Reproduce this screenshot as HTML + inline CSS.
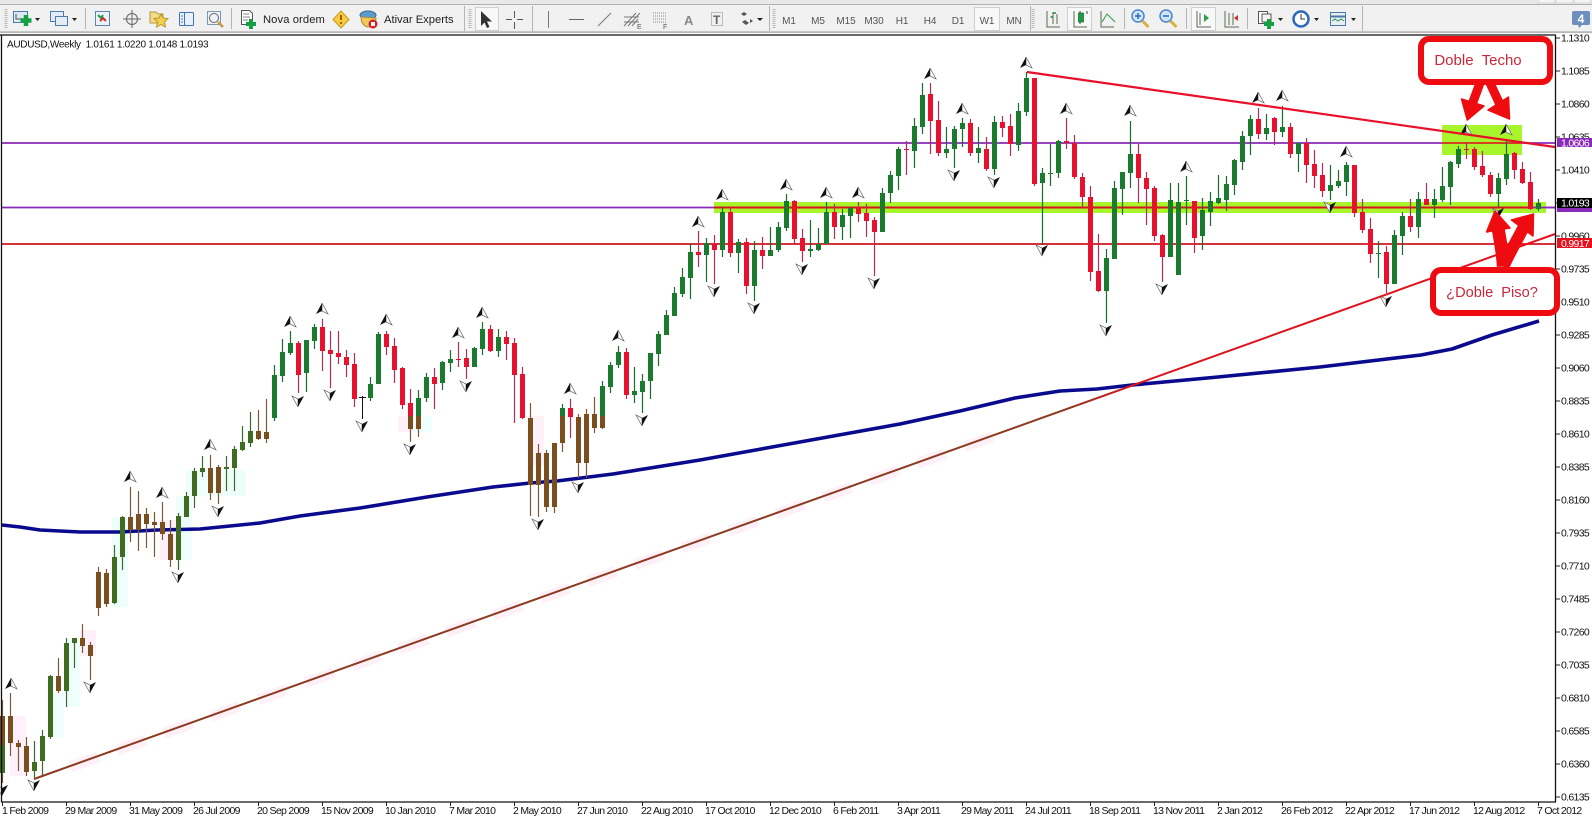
<!DOCTYPE html>
<html><head><meta charset="utf-8"><title>AUDUSD,Weekly</title>
<style>html,body{margin:0;padding:0;background:#fff;overflow:hidden}svg{display:block}
text{font-family:"Liberation Sans",Arial,sans-serif}
.a text{font-size:10.5px;letter-spacing:-.68px;fill:#111}
.t text{font-size:10px;fill:#555;letter-spacing:-.1px}
.l{fill:none;stroke:#555;stroke-width:1}
</style></head><body>
<svg width="1592" height="818" viewBox="0 0 1592 818" xmlns="http://www.w3.org/2000/svg">
<defs>
<g id="u"><path d="M0-6 6 5 0 2Z" fill="#fff" stroke="#666" stroke-width=".7"/><path d="M0-6-6 5 0 2Z" fill="#111"/></g>
<g id="d"><path d="M0 6-6-5 0-2Z" fill="#fff" stroke="#666" stroke-width=".7"/><path d="M0 6 6-5 0-2Z" fill="#111"/></g>
<linearGradient id="tl" gradientUnits="userSpaceOnUse" x1="34" y1="0" x2="1555" y2="0"><stop offset="0" stop-color="#8c3a20"/><stop offset=".68" stop-color="#8c3a20"/><stop offset=".72" stop-color="#d8141e"/><stop offset="1" stop-color="#e8101c"/></linearGradient>
</defs>
<!-- toolbar -->
<rect width="1592" height="5" fill="#e9e9e9"/><rect y="4" width="1592" height="1" fill="#b0b0b0"/>
<rect y="5" width="1592" height="27" fill="#f1f1f1"/><rect y="31.5" width="1592" height="1.2" fill="#9a9a9a"/>
<rect y="33" width="1592" height="2" fill="#fafafa"/>
<g fill="#f4f4f4" stroke="#ccc" stroke-width=".7"><rect x="1538" y="-2" width="17" height="5"/><rect x="1556" y="-2" width="17" height="5"/><rect x="1574" y="-2" width="17" height="5"/></g>
<!-- grips and separators -->
<g stroke="#b8b8b8" stroke-width="3" stroke-dasharray="1 1"><path d="M6 9V29M470 9V29M774 9V29M1033 9V29"/></g>
<g stroke="#b5b5b5"><path d="M85.500 8V29M231.500 8V29M464.500 6V31M532.500 6V31M769.500 6V31M1030.500 6V31M1124.500 8V29M1186.500 8V29M1247.500 8V29M1362.500 6V31"/></g>
<!-- pressed buttons -->
<g fill="#f8f8f8" stroke="#cfcfcf"><rect x="475.500" y="7.500" width="23" height="23"/><rect x="974.500" y="7.500" width="25" height="23"/><rect x="1067.500" y="7.500" width="24" height="23"/><rect x="1191.500" y="7.500" width="24" height="23"/></g>
<!-- new chart -->
<rect x="13.500" y="11.500" width="14" height="11" fill="#dce8f4" stroke="#4c7cae"/><path d="M16 14v5h8" class="l" stroke="#4c7cae"/>
<path d="M26 15v11M20.500 20.500h11" stroke="#12a040" stroke-width="4.500"/><path d="M35 18h5l-2.500 3z" fill="#222"/>
<!-- profiles -->
<rect x="50.500" y="11.500" width="13" height="10" fill="#e4ecf6" stroke="#4c7cae"/><rect x="55.500" y="16.500" width="12" height="9" fill="#e4ecf6" stroke="#4c7cae"/><path d="M72 18h5l-2.500 3z" fill="#222"/>
<!-- market watch -->
<rect x="95.500" y="11.500" width="14" height="14" fill="#eef3f8" stroke="#5a86b4"/><path d="M98 15l3 3 2-3" stroke="#18a045" fill="none" stroke-width="2"/><path d="M100 21l3-3 3 3" stroke="#d03030" fill="none" stroke-width="2"/>
<!-- crosshair nav -->
<circle cx="132" cy="19" r="5.500" fill="none" stroke="#666"/><path d="M132 10v18M123 19h18" stroke="#666"/>
<!-- folder star -->
<path d="M150 12h6l2 2h5v9h-13z" fill="#f0dc8a" stroke="#b8983e"/><path d="M161 14l2 4 5 .500-3.500 3.500 1 5-4.500-2.500-4.500 2.500 1-5-3.500-3.500 5-.500z" fill="#f4d04a" stroke="#b8982e"/>
<!-- window -->
<rect x="179.500" y="12.500" width="14" height="13" rx="1" fill="#eaf1fa" stroke="#3f74b6"/><path d="M184.500 13v12M181 16h2M181 19h2M181 22h2" stroke="#3f74b6"/>
<!-- tester -->
<rect x="207.500" y="11.500" width="13" height="13" fill="#edf2f6" stroke="#7a98b4"/><circle cx="214" cy="18" r="4.500" fill="none" stroke="#666"/><path d="M218 22l5 5" stroke="#c8983e" stroke-width="2.500"/>
<!-- new order -->
<path d="M241.500 10.500h8l3 3v11h-11z" fill="#fff" stroke="#555"/><path d="M243 14h6M243 17h7M243 20h5" stroke="#888"/><path d="M251 19v10M246 24h10" stroke="#12a040" stroke-width="4"/>
<text x="263" y="23" font-size="11.200" fill="#222" letter-spacing=".1">Nova ordem</text>
<!-- warning -->
<path d="M341 11l8 8.500-8 8.500-8-8.500z" fill="#f6cc3c" stroke="#c89a1e"/><path d="M341 15v5" stroke="#a05a10" stroke-width="2"/><circle cx="341" cy="23" r="1.100" fill="#a05a10"/>
<!-- experts -->
<ellipse cx="368" cy="15" rx="8" ry="4" fill="#5c9ccc" stroke="#3a6a96"/><path d="M361 17c0 8 5 10 8 10s7-2 7-9z" fill="#f0c860" stroke="#b08a30"/><circle cx="373" cy="24" r="4.500" fill="#d8202a"/><rect x="371" y="22" width="4" height="4" fill="#fff"/>
<text x="384" y="23" font-size="11.200" fill="#222">Ativar Experts</text>
<!-- cursor -->
<path d="M481 11v15l3.500-3.500 2.500 5.500 2.500-1-2.500-5.500h5z" fill="#333"/>
<path d="M514.500 11v7M514.500 22v7M506 19.500h6M517 19.500h6" stroke="#555"/>
<!-- draw tools -->
<path d="M548.500 11v17" stroke="#777"/><path d="M569 19.500h15" stroke="#666"/><path d="M598 26l13-13" stroke="#777"/>
<path d="M624 26l12-13M628 26l12-13M632 26l6-7M624 17h15M624 22h15" stroke="#777" fill="none"/><text x="637" y="29" font-size="7" fill="#555">E</text>
<path d="M653 13h13M653 16h13M653 19h13M653 22h13" stroke="#888" stroke-dasharray="1 1"/><text x="663" y="29" font-size="7" fill="#555">F</text>
<text x="684" y="25" font-size="13" fill="#888" font-weight="bold">A</text>
<rect x="711.500" y="12.500" width="11" height="13" fill="none" stroke="#888" stroke-dasharray="1 1"/><text x="713" y="24" font-size="12" fill="#666" font-weight="bold">T</text>
<path d="M741 14l3-2 3 2-3 2zM745 20l4 3-3 2-4-3z" fill="#555"/><path d="M750 19l3 2-3 2z" fill="#555"/><path d="M757 18h6l-3 3z" fill="#222"/>
<!-- timeframes -->
<g class="t" text-anchor="middle"><text x="789" y="24">M1</text><text x="818" y="24">M5</text><text x="846" y="24">M15</text><text x="874" y="24">M30</text><text x="902" y="24">H1</text><text x="930" y="24">H4</text><text x="958" y="24">D1</text><text x="987" y="24">W1</text><text x="1014" y="24">MN</text></g>
<!-- chart type -->
<g fill="none" stroke="#5a6a50"><path d="M1047 11v16h13M1053 12v12M1057 14v10"/></g><path d="M1050.500 17h3M1053 13h3" stroke="#208a3a" stroke-width="1.500"/>
<path d="M1074 11v16h13" fill="none" stroke="#5a6a50"/><path d="M1080 11v13M1087 11v3" stroke="#444"/><rect x="1078.500" y="13" width="5" height="9" fill="#18a040" stroke="#146030" stroke-width=".7"/>
<path d="M1101 11v16h13" fill="none" stroke="#5a6a50"/><path d="M1102 22l5-8 8 8" fill="none" stroke="#2a9a48"/>
<!-- zoom -->
<circle cx="1138" cy="16" r="6" fill="#cfe4fa" stroke="#4a88c8" stroke-width="1.500"/><path d="M1135 16h6M1138 13v6" stroke="#2a6ab0" stroke-width="1.500"/><path d="M1142.500 21l6 6" stroke="#d8b040" stroke-width="3"/>
<circle cx="1166" cy="16" r="6" fill="#cfe4fa" stroke="#4a88c8" stroke-width="1.500"/><path d="M1163 16h6" stroke="#2a6ab0" stroke-width="1.500"/><path d="M1170.500 21l6 6" stroke="#d8b040" stroke-width="3"/>
<!-- autoscroll -->
<path d="M1197 11v16h14M1200 13v12" fill="none" stroke="#5a6a50"/><path d="M1204 14l5 4-5 4z" fill="#2aa04a"/>
<path d="M1225 11v16h14M1229 13v12M1233 13v12" fill="none" stroke="#5a6a50"/><path d="M1238 15l-4 3 4 3z" fill="#c83030"/>
<!-- add indicator -->
<path d="M1258.500 11.500h9v12h-9z" fill="#fff" stroke="#555"/><path d="M1262 14h9v8h-9z" fill="#f4f4f4" stroke="#555"/><path d="M1269 19v10M1264 24h10" stroke="#12a040" stroke-width="4"/><path d="M1278 18h5l-2.500 3z" fill="#222"/>
<circle cx="1301" cy="19" r="7.500" fill="#fff" stroke="#2a68b8" stroke-width="2.500"/><path d="M1301 14v5h4" fill="none" stroke="#333"/><path d="M1314 18h5l-2.500 3z" fill="#222"/>
<rect x="1330.500" y="12.500" width="15" height="13" fill="#e8f0f6" stroke="#4a78a8"/><path d="M1331 16.500h14" stroke="#4a78a8" stroke-width="2"/><path d="M1332 21l3-2 3 2 3-2 3 2" stroke="#3a9a50" fill="none"/><path d="M1351 18h5l-2.500 3z" fill="#222"/>
<path d="M1574 11h14a2 2 0 0 1 2 2v10a2 2 0 0 1-2 2h-6l-3 3-1-3h-4a2 2 0 0 1-2-2V13a2 2 0 0 1 2-2z" fill="#6c8fbc"/><text x="1581" y="23" font-size="12" font-weight="bold" fill="#fff" text-anchor="middle">4</text>

<!-- chart frame -->
<rect x="2" y="35.500" width="1553" height="766" fill="#fff"/>
<!-- pale tints -->
<g fill="#eefffb"><rect x="50" y="693" width="14" height="44"/><rect x="112" y="517" width="16" height="90"/><rect x="176" y="496" width="16" height="64"/><rect x="66" y="640" width="14" height="67"/><rect x="414" y="416" width="18" height="16"/><rect x="186" y="470" width="60" height="26"/></g>
<g fill="#fff0fa"><rect x="160" y="520" width="16" height="40"/><rect x="80" y="630" width="16" height="26"/><rect x="398" y="416" width="16" height="16"/><rect x="528" y="416" width="16" height="50"/><rect x="10" y="716" width="16" height="60"/></g>
<path d="M70 767L1000 434" stroke="#fff0f8" stroke-width="11" fill="none" stroke-dasharray="30 20"/>
<!-- horizontal lines -->
<path d="M2 143H1555M2 207.500H1555" stroke="#8a2ab8" stroke-width="1.800"/>
<rect x="714" y="202" width="832" height="11" fill="#a8f52c"/>
<rect x="1442" y="125" width="80" height="30" fill="#a8f52c"/>
<path d="M1442 143H1522" stroke="#d8281e" stroke-width="1.800"/>
<path d="M714 207.500H1533" stroke="#d8141e" stroke-width="2"/>
<path d="M1533 207.500H1555" stroke="#8a2ab8" stroke-width="1.800"/>
<path d="M2 244H1555" stroke="#d0141e" stroke-width="1.800"/>
<!-- moving average -->
<path d="M2 525L20 527 40 530 80 532 120 532 157 530 200 529 260 523 300 516 360 508 427 497 493 487 530 483 557 481 613 474 700 460 800 442 900 424 960 411 1015 398 1060 391 1097 389 1132 385 1218 377 1320 367 1421 355 1452 349 1492 335 1539 321" fill="none" stroke="#0a0a8e" stroke-width="3.600" stroke-linejoin="round"/>

<!-- candles: wicks -->
<path fill="none" stroke="#b03058" stroke-width="1.200" d="M298.500 341V393M322.500 319V371M330.500 331V388M338.500 331V364M346.500 350V377M354.500 353V407M386.500 331V355M394.500 338V383M402.500 367V409M410.500 389V416M434.500 368V409M458.500 342V367M466.500 349V379M490.500 325V352M506.500 331V360M514.500 338V423M522.500 367V419M570.500 399V438M626.500 348V399M698.500 231V267M714.500 235V284M730.500 207V257M746.500 238V294M762.500 237V269M794.500 200V245M802.500 229V262M834.500 204V239M858.500 202V222M866.500 204V237M874.500 217V276M906.500 141V175M930.500 83V154M938.500 101V156M970.500 119V156M986.500 137V171M1002.500 116V137M1010.500 114V156M1034.500 78V186M1066.500 118V149M1074.500 135V179M1082.500 173V207M1090.500 186V281M1098.500 234V292M1138.500 144V203M1146.500 172V225M1154.500 186V241M1162.500 234V282M1194.500 201V253M1258.500 108V139M1274.500 117V145M1290.500 123V158M1306.500 138V183M1314.500 150V188M1322.500 163V197M1354.500 165V217M1362.500 199V233M1370.500 218V263M1386.500 246V293M1410.500 199V232M1426.500 183V205M1466.500 142V159M1474.500 147V170M1482.500 151V177M1490.500 172V197M1514.500 152V179M1522.500 162V184M1530.500 172V210"/>
<path fill="none" stroke="#1e6a30" stroke-width="1.200" d="M274.500 365V421M282.500 339V382M290.500 331V355M306.500 340V392M314.500 324V349M370.500 377V401M378.500 332V384M418.500 390V416M426.500 373V402M442.500 361V390M450.500 350V372M474.500 347V367M482.500 322V355M498.500 329V357M562.500 404V416M602.500 381V416M610.500 362V393M618.500 346V368M634.500 367V403M642.500 374V413M650.500 353V399M658.500 331V366M666.500 310V335M674.500 287V316M682.500 268V297M690.500 244V299M706.500 238V282M722.500 207V257M738.500 239V273M754.500 241V301M770.500 227V256M778.500 222V252M786.500 194V231M810.500 220V257M818.500 228V251M826.500 202V244M842.500 209V240M850.500 207V238M882.500 188V232M890.500 171V203M898.500 147V190M914.500 118V168M922.500 83V134M946.500 127V158M954.500 126V168M962.500 118V147M978.500 127V163M994.500 116V175M1018.500 103V151M1026.500 72V116M1042.500 168V245M1050.500 144V186M1058.500 140V178M1106.500 249V323M1114.500 181V259M1122.500 172V215M1130.500 121V188M1170.500 183V257M1178.500 183V275M1186.500 176V225M1202.500 198V250M1210.500 192V226M1218.500 175V204M1226.500 176V211M1234.500 159V195M1242.500 131V170M1250.500 115V155M1266.500 114V140M1282.500 106V137M1298.500 143V172M1330.500 165V200M1338.500 170V188M1346.500 162V196M1378.500 241V278M1394.500 230V284M1402.500 212V255M1418.500 192V238M1434.500 189V218M1442.500 167V202M1450.500 161V205M1458.500 146V168M1498.500 173V207M1506.500 140V185M1538.500 199V211"/>
<path fill="none" stroke="#7a5a38" stroke-width="1.200" d="M2.500 700V783M10.500 693V756M18.500 740V771M26.500 737V776M58.500 658V693M82.500 624V653M90.500 642V680M98.500 567V616M106.500 569V607M130.500 487V542M138.500 491V551M146.500 508V548M154.500 512V557M162.500 502V540M170.500 520V567M210.500 455V500M218.500 465V504M258.500 410V440M266.500 399V443M410.500 416V442M418.500 416V437M530.500 403V516M538.500 444V517M546.500 450V512M554.500 443V513M562.500 416V452M578.500 414V478M586.500 409V478M594.500 397V433M602.500 416V429"/>
<path fill="none" stroke="#3a6a30" stroke-width="1.200" d="M34.500 741V778M42.500 730V777M50.500 675V739M66.500 638V707M74.500 638V668M114.500 545V604M122.500 516V570M178.500 513V570M186.500 492V517M194.500 468V508M202.500 456V477M226.500 456V491M234.500 446V491M242.500 426V451M250.500 412V447"/>
<path d="M362.500 396V419M359 397.500H366" stroke="#111" fill="none"/>
<!-- candles: bodies -->
<path fill="none" stroke="#e8122e" stroke-width="5" d="M298.500 343V375M322.500 327V351M330.500 350V354M338.500 353V357M346.500 357V365M354.500 364V399M386.500 334V347M394.500 346V370M402.500 368V405M410.500 403V416M434.500 377V384M458.500 359V360M466.500 358V367M490.500 329V351M506.500 337V344M514.500 343V375M522.500 374V418M570.500 408V417M626.500 352V395M698.500 252V255M714.500 244V250M730.500 212V253M746.500 242V286M762.500 250V256M794.500 201V239M802.500 238V251M834.500 212V227M858.500 207V214M866.500 213V221M874.500 220V232M906.500 149V150M930.500 94V121M938.500 120V153M970.500 123V153M986.500 149V169M1002.500 122V128M1010.500 126V144M1034.500 78V184M1066.500 141V143M1074.500 143V177M1082.500 177V197M1090.500 197V272M1098.500 271V291M1138.500 154V178M1146.500 178V189M1154.500 188V236M1162.500 235V257M1194.500 201V238M1258.500 119V134M1274.500 118V132M1290.500 127V154M1306.500 143V165M1314.500 164V176M1322.500 175V191M1354.500 165V213M1362.500 212V230M1370.500 229V254M1386.500 252V284M1410.500 216V227M1426.500 199V205M1466.500 149V150M1474.500 149V167M1482.500 166V175M1490.500 175V194M1514.500 153V170M1522.500 169V183M1530.500 182V209"/>
<path fill="none" stroke="#1a7a2e" stroke-width="5" d="M274.500 375V418M282.500 352V376M290.500 343V353M306.500 340V373M314.500 327V341M370.500 384V398M378.500 334V384M418.500 398V416M426.500 377V398M442.500 362V383M450.500 359V363M474.500 348V367M482.500 329V349M498.500 337V351M562.500 408V416M602.500 386V416M610.500 365V387M618.500 352V365M634.500 391V395M642.500 381V392M650.500 353V381M658.500 334V354M666.500 315V335M674.500 293V316M682.500 277V294M690.500 252V278M706.500 243V255M722.500 212V250M738.500 242V253M754.500 250V286M770.500 250V256M778.500 227V250M786.500 201V228M810.500 249V251M818.500 244V250M826.500 212V244M842.500 215V227M850.500 208V216M882.500 193V232M890.500 175V193M898.500 149V176M914.500 126V151M922.500 95V127M946.500 149V153M954.500 129V149M962.500 123V129M978.500 148V153M994.500 122V169M1018.500 111V145M1026.500 78V112M1042.500 173V183M1050.500 173V174M1058.500 141V173M1106.500 258V291M1114.500 188V259M1122.500 172V189M1130.500 154V173M1170.500 200V257M1178.500 202V275M1186.500 200V201M1202.500 210V236M1210.500 201V212M1218.500 198V203M1226.500 184V200M1234.500 160V185M1242.500 136V162M1250.500 119V136M1266.500 128V134M1282.500 127V132M1298.500 143V154M1330.500 185V191M1338.500 181V186M1346.500 165V182M1378.500 253V254M1394.500 235V284M1402.500 216V236M1418.500 199V227M1434.500 199V205M1442.500 186V200M1450.500 162V187M1458.500 149V164M1498.500 178V194M1506.500 154V179M1538.500 203V209"/>
<path fill="none" stroke="#7a4e1e" stroke-width="5" d="M2.500 716V745M10.500 716V743M18.500 743V747M26.500 746V772M58.500 676V691M82.500 638V646M90.500 645V656M98.500 572V608M106.500 573V604M130.500 517V530M138.500 514V530M146.500 514V524M154.500 522V525M162.500 522V534M170.500 534V560M210.500 468V493M218.500 467V493M258.500 431V439M266.500 432V439M410.500 416V429M418.500 416V429M530.500 418V485M538.500 453V485M546.500 453V507M554.500 443V507M562.500 416V443M578.500 417V463M586.500 414V463M594.500 414V428M602.500 416V428"/>
<path fill="none" stroke="#3f6c20" stroke-width="5" d="M2.500 745V773M34.500 762V771M42.500 736V761M50.500 676V737M66.500 643V691M74.500 638V643M114.500 557V603M122.500 517V557M178.500 516V560M186.500 496V517M194.500 471V496M202.500 468V472M226.500 467V469M234.500 449V468M242.500 442V450M250.500 431V443"/>
<!-- fractal arrows -->
<use href="#u" x="11" y="684"/><use href="#u" x="130" y="477"/><use href="#u" x="162" y="493"/><use href="#u" x="210" y="445"/><use href="#u" x="290" y="322"/><use href="#u" x="322" y="309"/><use href="#u" x="386" y="320"/><use href="#u" x="458" y="333"/><use href="#u" x="482" y="313"/><use href="#u" x="570" y="389"/><use href="#u" x="618" y="336"/><use href="#u" x="698" y="222"/><use href="#u" x="722" y="195"/><use href="#u" x="786" y="185"/><use href="#u" x="826" y="193"/><use href="#u" x="858" y="193"/><use href="#u" x="930" y="74"/><use href="#u" x="962" y="109"/><use href="#u" x="1026" y="63"/><use href="#u" x="1066" y="109"/><use href="#u" x="1130" y="111"/><use href="#u" x="1186" y="167"/><use href="#u" x="1258" y="98"/><use href="#u" x="1282" y="96"/><use href="#u" x="1346" y="152"/><use href="#u" x="1466" y="130"/><use href="#u" x="1506" y="130"/>
<use href="#d" x="2" y="790"/><use href="#d" x="34" y="785"/><use href="#d" x="90" y="687"/><use href="#d" x="178" y="577"/><use href="#d" x="218" y="511"/><use href="#d" x="298" y="401"/><use href="#d" x="330" y="395"/><use href="#d" x="362" y="426"/><use href="#d" x="410" y="449"/><use href="#d" x="466" y="386"/><use href="#d" x="538" y="524"/><use href="#d" x="578" y="487"/><use href="#d" x="642" y="420"/><use href="#d" x="714" y="291"/><use href="#d" x="754" y="308"/><use href="#d" x="802" y="269"/><use href="#d" x="874" y="283"/><use href="#d" x="954" y="175"/><use href="#d" x="994" y="182"/><use href="#d" x="1042" y="250"/><use href="#d" x="1106" y="330"/><use href="#d" x="1162" y="289"/><use href="#d" x="1330" y="207"/><use href="#d" x="1386" y="301"/><use href="#d" x="1498" y="213"/>
<!-- trend lines -->
<path d="M34 779L1555 234" stroke="url(#tl)" stroke-width="2" fill="none"/>
<path d="M1027 72L1555 147" stroke="#e8102a" stroke-width="2.200" fill="none"/>
<!-- frame lines -->
<path d="M1.500 35V802M0 35H1556M1555.500 35V802M1 802H1556" stroke="#111" stroke-width="1.300" fill="none"/>
<!-- axis ticks -->
<path stroke="#222" d="M1556 38h4M1556 71h4M1556 104h4M1556 137h4M1556 170h4M1556 203h4M1556 236h4M1556 269h4M1556 302h4M1556 335h4M1556 368h4M1556 401h4M1556 434h4M1556 467h4M1556 500h4M1556 533h4M1556 566h4M1556 599h4M1556 632h4M1556 665h4M1556 698h4M1556 731h4M1556 764h4M1556 797h4"/>
<path stroke="#222" d="M2.500 802v4M66.500 802v4M130.500 802v4M194.500 802v4M258.500 802v4M322.500 802v4M386.500 802v4M450.500 802v4M514.500 802v4M578.500 802v4M642.500 802v4M706.500 802v4M770.500 802v4M834.500 802v4M898.500 802v4M962.500 802v4M1026.500 802v4M1090.500 802v4M1154.500 802v4M1218.500 802v4M1282.500 802v4M1346.500 802v4M1410.500 802v4M1474.500 802v4M1538.500 802v4"/>
<g class="a">
<text x="1561" y="41.500">1.1310</text><text x="1561" y="74.500">1.1085</text><text x="1561" y="107.500">1.0860</text><text x="1561" y="140.500">1.0635</text><text x="1561" y="173.500">1.0410</text><text x="1561" y="206.500">1.0185</text><text x="1561" y="239.500">0.9960</text><text x="1561" y="272.500">0.9735</text><text x="1561" y="305.500">0.9510</text><text x="1561" y="338.500">0.9285</text><text x="1561" y="371.500">0.9060</text><text x="1561" y="404.500">0.8835</text><text x="1561" y="437.500">0.8610</text><text x="1561" y="470.500">0.8385</text><text x="1561" y="503.500">0.8160</text><text x="1561" y="536.500">0.7935</text><text x="1561" y="569.500">0.7710</text><text x="1561" y="602.500">0.7485</text><text x="1561" y="635.500">0.7260</text><text x="1561" y="668.500">0.7035</text><text x="1561" y="701.500">0.6810</text><text x="1561" y="734.500">0.6585</text><text x="1561" y="767.500">0.6360</text><text x="1561" y="800.500">0.6135</text>
<text x="2" y="814">1 Feb 2009</text><text x="65" y="814">29 Mar 2009</text><text x="129" y="814">31 May 2009</text><text x="193" y="814">26 Jul 2009</text><text x="257" y="814">20 Sep 2009</text><text x="321" y="814">15 Nov 2009</text><text x="385" y="814">10 Jan 2010</text><text x="449" y="814">7 Mar 2010</text><text x="513" y="814">2 May 2010</text><text x="577" y="814">27 Jun 2010</text><text x="641" y="814">22 Aug 2010</text><text x="705" y="814">17 Oct 2010</text><text x="769" y="814">12 Dec 2010</text><text x="833" y="814">6 Feb 2011</text><text x="897" y="814">3 Apr 2011</text><text x="961" y="814">29 May 2011</text><text x="1025" y="814">24 Jul 2011</text><text x="1089" y="814">18 Sep 2011</text><text x="1153" y="814">13 Nov 2011</text><text x="1217" y="814">2 Jan 2012</text><text x="1281" y="814">26 Feb 2012</text><text x="1345" y="814">22 Apr 2012</text><text x="1409" y="814">17 Jun 2012</text><text x="1473" y="814">12 Aug 2012</text><text x="1537" y="814">7 Oct 2012</text>
</g>
<text x="7" y="47.500" font-size="10" fill="#111" letter-spacing="-.3" xml:space="preserve">AUDUSD,Weekly  1.0161 1.0220 1.0148 1.0193</text>
<!-- price boxes -->
<rect x="1557" y="138" width="35" height="9" fill="#8a2ab8"/><text x="1561" y="146.500" font-size="10.500" letter-spacing="-.68" fill="#fff">1.0606</text>
<rect x="1557" y="207" width="35" height="5" fill="#8a2ab8"/>
<rect x="1557" y="198" width="35" height="10" fill="#000"/><text x="1561" y="206.500" font-size="10.500" letter-spacing="-.68" fill="#fff">1.0193</text>
<rect x="1557" y="238" width="35" height="10" fill="#e8101c"/><text x="1561" y="247" font-size="10.500" letter-spacing="-.68" fill="#fff">0.9917</text>
<!-- red arrows -->
<g fill="#ee0c10" stroke="#ee0c10" stroke-linejoin="round">
<path d="M1480 83L1470 110" stroke-width="9" fill="none"/><path d="M1467.300 120L1461.500 99 1484 106Z" stroke-width="1.500"/>
<path d="M1490 83L1502 109" stroke-width="9" fill="none"/><path d="M1509.500 119L1488 110 1508.500 97Z" stroke-width="1.500"/>
<path d="M1503.300 266.700C1503 254 1500 240 1497.300 224" stroke-width="13" fill="none"/><path d="M1495 211L1486.500 232 1510 228Z" stroke-width="1.500"/>
<path d="M1503.300 266.700C1509 254 1517 240 1524 226.700" stroke-width="12" fill="none"/><path d="M1533.500 214L1511.500 220 1533 236Z" stroke-width="1.500"/>
</g>
<!-- callouts -->
<rect x="1421" y="39" width="129" height="43" rx="8" fill="#fff" stroke="#ee0c10" stroke-width="6"/>
<text x="1478" y="65" font-size="15" fill="#c8283a" text-anchor="middle" xml:space="preserve">Doble  Techo</text>
<rect x="1433" y="270" width="124" height="43" rx="8" fill="#fff" stroke="#ee0c10" stroke-width="6"/>
<text x="1492" y="297" font-size="14.600" fill="#c8283a" text-anchor="middle" xml:space="preserve">¿Doble  Piso?</text>
</svg>
</body></html>
